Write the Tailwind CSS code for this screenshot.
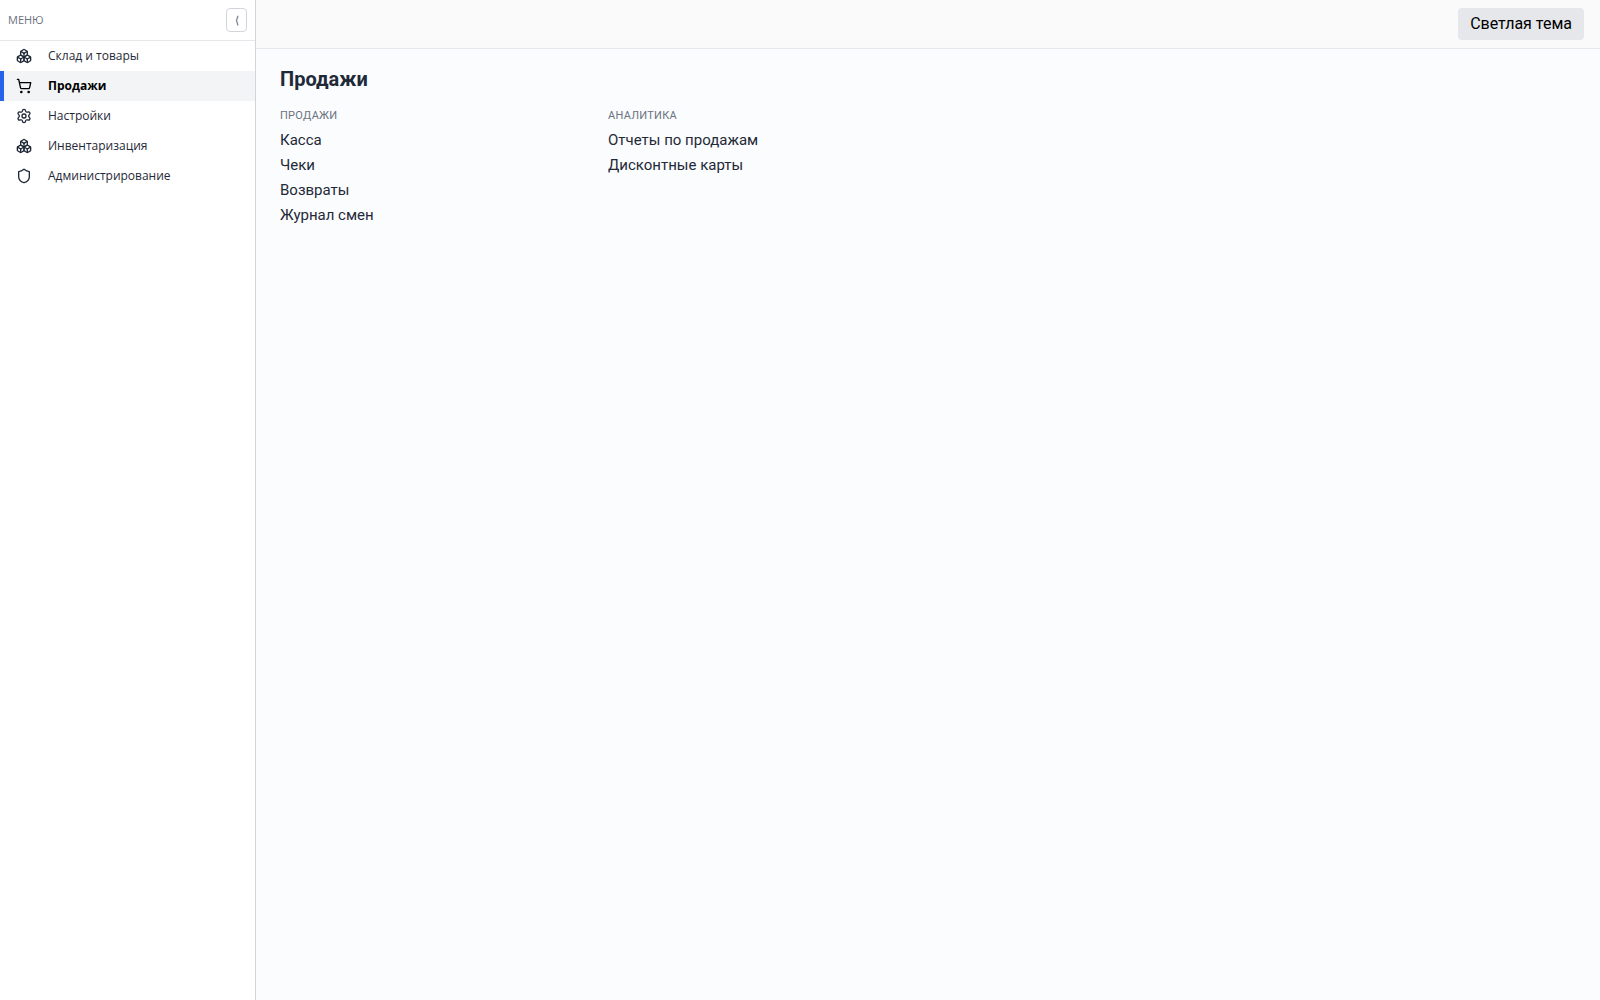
<!DOCTYPE html>
<html lang="ru">
<head>
  <meta charset="UTF-8" />
  <meta name="viewport" content="width=device-width, initial-scale=1.0"/>
  <title>Продажи</title>
  <script src="https://cdn.jsdelivr.net/npm/@tailwindcss/browser@4"></script>
</head>
<body class="flex min-h-screen bg-[#fafcfe] font-[Roboto,sans-serif] text-[#1f2937]">

  <!-- Sidebar -->
  <aside class="w-64 shrink-0 border-r border-[#d1d5db] bg-white font-['Open_Sans',sans-serif]">
    <div class="flex items-center justify-between border-b border-[#e5e7eb] p-2">
      <span class="text-[11px] leading-4 text-[#6b7280] uppercase">Меню</span>
      <button type="button" id="collapse" aria-label="Свернуть меню" class="h-6 w-[21px] rounded border border-[#d1d5db] text-[11px] leading-4 text-[#4b5563]">⟨</button>
    </div>
    <nav class="text-xs leading-[18px]">
      <a href="#" class="flex items-center gap-4 border-l-4 border-transparent py-1.5 pr-3 pl-3">
        <svg class="size-4 shrink-0" viewBox="0 0 24 24" fill="none" stroke="currentColor" stroke-width="2" stroke-linecap="round" stroke-linejoin="round">
          <path d="M2.97 12.92A2 2 0 0 0 2 14.63v3.24a2 2 0 0 0 .97 1.71l3 1.8a2 2 0 0 0 2.06 0L12 19v-5.5l-5-3-4.03 2.42Z"/><path d="m7 16.5-4.74-2.85"/><path d="m7 16.5 5-3"/><path d="M7 16.5v5.17"/>
          <path d="M12 13.5V19l3.97 2.38a2 2 0 0 0 2.06 0l3-1.8a2 2 0 0 0 .97-1.71v-3.24a2 2 0 0 0-.97-1.71L17 10.5l-5 3Z"/><path d="m17 16.5-5-3"/><path d="m17 16.5 4.74-2.85"/><path d="M17 16.5v5.17"/>
          <path d="M7.97 4.42A2 2 0 0 0 7 6.13v4.37l5 3 5-3V6.13a2 2 0 0 0-.97-1.71l-3-1.8a2 2 0 0 0-2.06 0l-3 1.8Z"/><path d="M12 8 7.26 5.15"/><path d="m12 8 4.74-2.85"/><path d="M12 13.5V8"/>
        </svg>
        <span>Склад и товары</span>
      </a>
      <a href="#" aria-current="page" class="flex items-center gap-4 border-l-4 border-[#2563eb] bg-[#f3f4f6] py-1.5 pr-3 pl-3 font-bold text-black">
        <svg class="size-4 shrink-0" viewBox="0 0 24 24" fill="none" stroke="currentColor" stroke-width="2" stroke-linecap="round" stroke-linejoin="round">
          <circle cx="8" cy="21" r="1"/><circle cx="19" cy="21" r="1"/>
          <path d="M2.05 2.05h2l2.66 12.42a2 2 0 0 0 2 1.58h9.78a2 2 0 0 0 1.95-1.57l1.65-7.43H5.12"/>
        </svg>
        <span>Продажи</span>
      </a>
      <a href="#" class="flex items-center gap-4 border-l-4 border-transparent py-1.5 pr-3 pl-3">
        <svg class="size-4 shrink-0" viewBox="0 0 24 24" fill="none" stroke="currentColor" stroke-width="2" stroke-linecap="round" stroke-linejoin="round">
          <path d="M9.671 4.136a2.34 2.34 0 0 1 4.659 0 2.34 2.34 0 0 0 3.319 1.915 2.34 2.34 0 0 1 2.33 4.033 2.34 2.34 0 0 0 0 3.831 2.34 2.34 0 0 1-2.33 4.033 2.34 2.34 0 0 0-3.319 1.915 2.34 2.34 0 0 1-4.659 0 2.34 2.34 0 0 0-3.32-1.915 2.34 2.34 0 0 1-2.33-4.033 2.34 2.34 0 0 0 0-3.831A2.34 2.34 0 0 1 6.35 6.051a2.34 2.34 0 0 0 3.319-1.915"/>
          <circle cx="12" cy="12" r="3"/>
        </svg>
        <span>Настройки</span>
      </a>
      <a href="#" class="flex items-center gap-4 border-l-4 border-transparent py-1.5 pr-3 pl-3">
        <svg class="size-4 shrink-0" viewBox="0 0 24 24" fill="none" stroke="currentColor" stroke-width="2" stroke-linecap="round" stroke-linejoin="round">
          <path d="M2.97 12.92A2 2 0 0 0 2 14.63v3.24a2 2 0 0 0 .97 1.71l3 1.8a2 2 0 0 0 2.06 0L12 19v-5.5l-5-3-4.03 2.42Z"/><path d="m7 16.5-4.74-2.85"/><path d="m7 16.5 5-3"/><path d="M7 16.5v5.17"/>
          <path d="M12 13.5V19l3.97 2.38a2 2 0 0 0 2.06 0l3-1.8a2 2 0 0 0 .97-1.71v-3.24a2 2 0 0 0-.97-1.71L17 10.5l-5 3Z"/><path d="m17 16.5-5-3"/><path d="m17 16.5 4.74-2.85"/><path d="M17 16.5v5.17"/>
          <path d="M7.97 4.42A2 2 0 0 0 7 6.13v4.37l5 3 5-3V6.13a2 2 0 0 0-.97-1.71l-3-1.8a2 2 0 0 0-2.06 0l-3 1.8Z"/><path d="M12 8 7.26 5.15"/><path d="m12 8 4.74-2.85"/><path d="M12 13.5V8"/>
        </svg>
        <span>Инвентаризация</span>
      </a>
      <a href="#" class="flex items-center gap-4 border-l-4 border-transparent py-1.5 pr-3 pl-3">
        <svg class="size-4 shrink-0" viewBox="0 0 24 24" fill="none" stroke="currentColor" stroke-width="2" stroke-linecap="round" stroke-linejoin="round">
          <path d="M20 13c0 5-3.5 7.5-7.66 8.95a1 1 0 0 1-.67-.01C7.5 20.5 4 18 4 13V6a1 1 0 0 1 1-1c2 0 4.5-1.2 6.24-2.72a1.17 1.17 0 0 1 1.52 0C14.51 3.81 17 5 19 5a1 1 0 0 1 1 1z"/>
        </svg>
        <span>Администрирование</span>
      </a>
    </nav>
  </aside>

  <div class="min-w-0 flex-1">
    <!-- Top bar -->
    <header class="flex justify-end border-b border-[#e5e7eb] bg-[#fafafa] px-4 py-2">
      <button type="button" class="rounded-sm bg-[#e5e7eb] px-3 py-1 text-base text-black">Светлая тема</button>
    </header>

    <!-- Section links -->
    <main class="px-6 py-4">
      <h1 class="mb-[15px] text-xl leading-7 font-bold">Продажи</h1>
      <div class="grid grid-cols-4 gap-4">
        <section>
          <h2 class="mb-1.5 text-[11px] leading-4 tracking-wide text-[#6b7280] uppercase">Продажи</h2>
          <ul class="space-y-1 text-[15px] leading-[21px]">
            <li><a href="#">Касса</a></li>
            <li><a href="#">Чеки</a></li>
            <li><a href="#">Возвраты</a></li>
            <li><a href="#">Журнал смен</a></li>
          </ul>
        </section>
        <section>
          <h2 class="mb-1.5 text-[11px] leading-4 tracking-wide text-[#6b7280] uppercase">Аналитика</h2>
          <ul class="space-y-1 text-[15px] leading-[21px]">
            <li><a href="#">Отчеты по продажам</a></li>
            <li><a href="#">Дисконтные карты</a></li>
          </ul>
        </section>
      </div>
    </main>
  </div>

</body>
</html>
